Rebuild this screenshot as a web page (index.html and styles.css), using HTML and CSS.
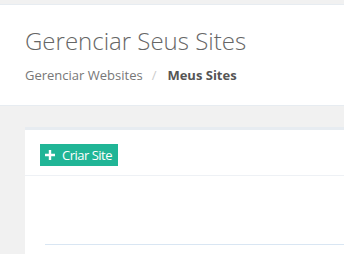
FILE: index.html
```html
<!DOCTYPE html>
<html lang="pt">
<head>
    <meta charset="UTF-8">
    <meta name="viewport" content="width=device-width, initial-scale=1.0">
    <title>Gerenciar Seus Sites</title>
    <link rel="stylesheet" href="styles.css">
</head>
<body>
    <div class="page-head">
        <h1 class="page-title">Gerenciar Seus Sites</h1>
        <ul class="breadcrumb">
            <li><a href="#">Gerenciar Websites</a></li>
            <li class="sep">/</li>
            <li class="active">Meus Sites</li>
        </ul>
    </div>
    <div class="page-content">
        <div class="portlet">
            <div class="portlet-title">
                <a href="#" class="btn-green">
                    <svg width="10" height="10" viewBox="0 0 10 10"><path d="M5 0v10M0 5h10" stroke="#fff" stroke-width="2.4"/></svg>
                    Criar Site
                </a>
            </div>
            <div class="portlet-body">
                <div class="table-line"></div>
            </div>
        </div>
    </div>
</body>
</html>
```

FILE: styles.css
```css
body {
    font-family: "Open Sans", sans-serif;
    margin: 0;
    padding: 0;
    background-color: #f1f1f1;
}
.page-head {
    background-color: white;
    margin-top: 4px;
    border-top: 1px solid #e7ecf1;
    border-bottom: 1px solid #e7ecf1;
    padding: 20px 25px 0;
    height: 80px;
}
.page-title {
    margin: 0;
    font-size: 24px;
    font-weight: 300;
    color: #666;
    line-height: 32px;
}
.breadcrumb {
    list-style: none;
    margin: 9px 0 0;
    padding: 0;
    display: flex;
    font-size: 13px;
    color: #777;
}
.breadcrumb a {
    color: #777;
    text-decoration: none;
}
.breadcrumb .sep {
    color: #ccc;
    padding: 0 10px 0 9px;
}
.breadcrumb .active {
    font-weight: 700;
    color: #555;
    margin-left: 1px;
}
.page-content {
    padding: 21px 0 0 25px;
}
.portlet {
    background-color: white;
    border-top: 3px solid #e7ecf1;
    height: 124px;
}
.portlet-title {
    display: flex;
    padding: 14px 15px 9px;
    border-bottom: 1px solid #eef1f5;
}
.btn-green {
    display: inline-flex;
    align-items: center;
    gap: 7px;
    height: 22px;
    padding: 0 6px 0 5px;
    background-color: #20b596;
    color: white;
    font-size: 13px;
    letter-spacing: -0.5px;
    text-decoration: none;
}
.portlet-body {
    padding: 68px 0 0 20px;
}
.table-line {
    border-top: 1px solid #d9e6f3;
}
```
